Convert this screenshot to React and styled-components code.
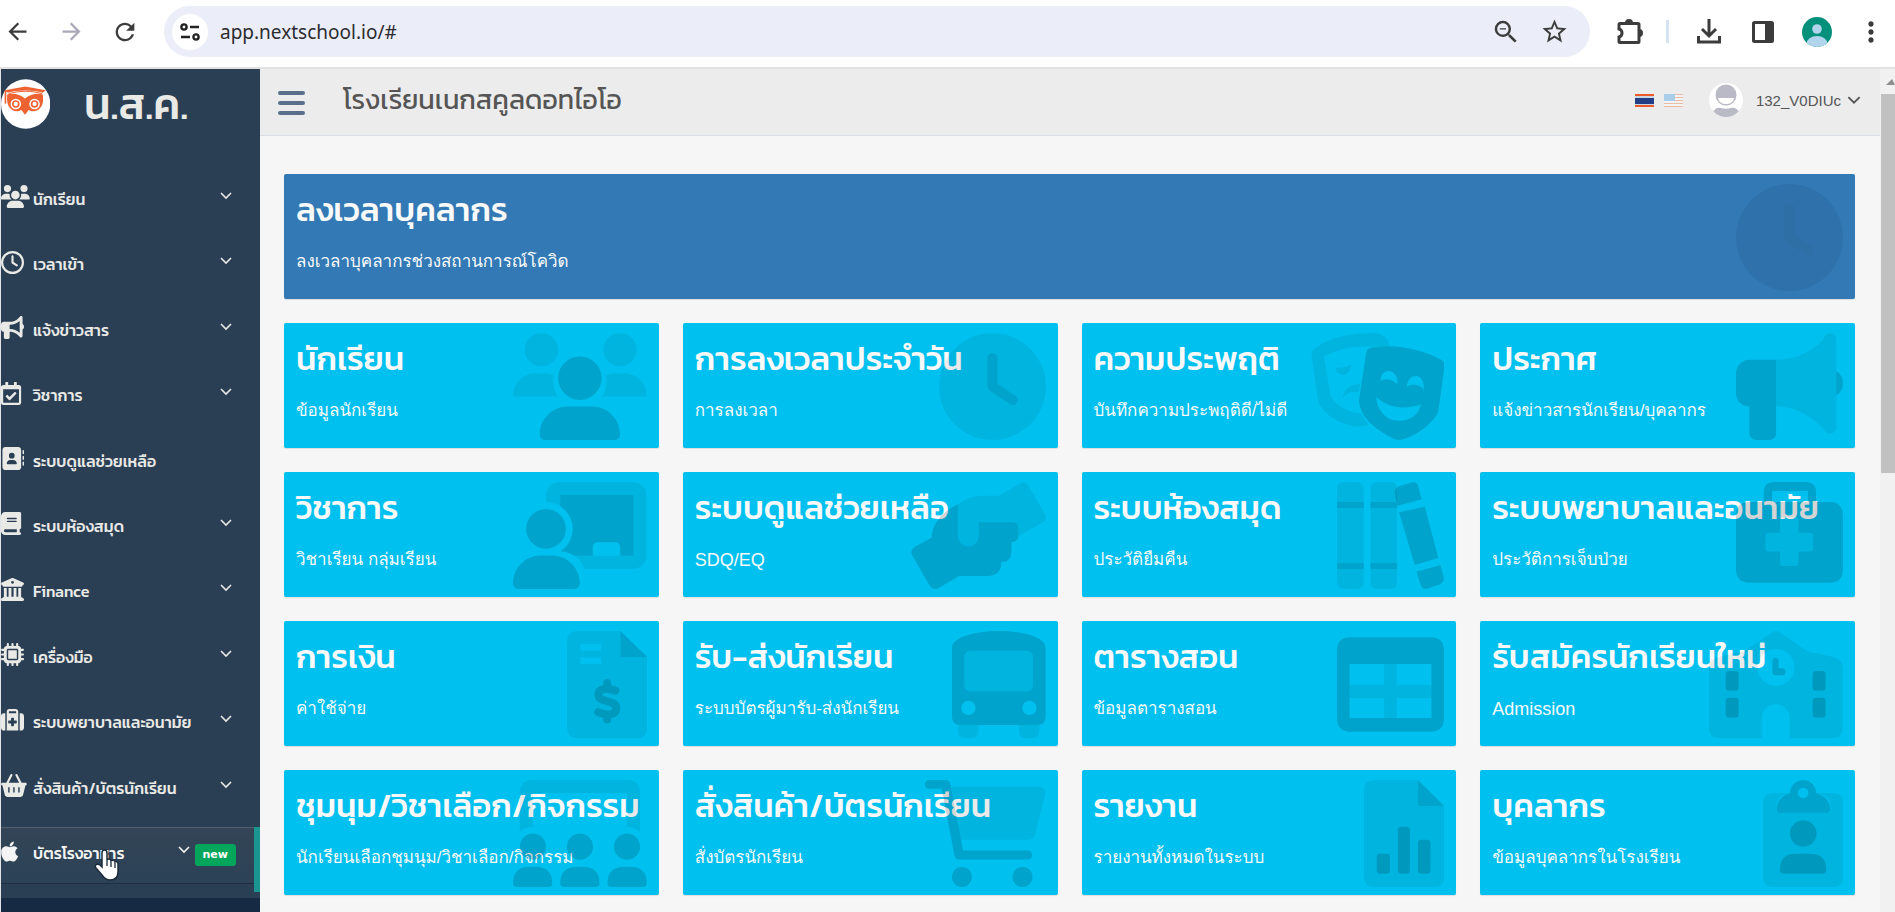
import React from 'react';
import styled, { createGlobalStyle, css } from 'styled-components';
import {
  FaUsers, FaBullhorn, FaAddressBook, FaBook, FaBuildingColumns, FaMicrochip,
  FaSuitcaseMedical, FaBasketShopping, FaApple, FaRegClock,
} from 'react-icons/fa6';
import { FaRegCalendarCheck } from 'react-icons/fa';
import {
  MdArrowBack, MdArrowForward, MdRefresh, MdZoomOut, MdStarOutline, MdMoreVert,
} from 'react-icons/md';

const thai = '"Kanit", "Noto Sans Thai", sans-serif';
const body = '"Liberation Sans", "Loma", sans-serif';

const GlobalStyle = createGlobalStyle`
  *, *::before, *::after { box-sizing: border-box; }
  body { margin: 0; background: #f6f6f6; font-family: ${body}; }
  a { color: inherit; text-decoration: none; }
  button { border: 0; padding: 0; background: none; color: inherit; font: inherit; cursor: pointer; }
  h1, h2, p, ul { margin: 0; padding: 0; }
  ul { list-style: none; }
`;

const Page = styled.div`
  display: flex;
  flex-direction: column;
  height: 100vh;
  overflow: hidden;
`;

/* ---------- browser bar ---------- */
const BrowserBar = styled.header`
  display: flex;
  align-items: center;
  flex: none;
  height: 69px;
  padding: 0 0 4px 4px;
  background: #fff;
  border-bottom: 2px solid #e2e2e2;
  color: #444;
`;
const BarButton = styled.button`
  display: grid;
  place-items: center;
  flex: none;
  width: ${p => p.$w}px;
  height: 44px;
  color: ${p => (p.$muted ? '#a9a8b8' : '#3c3c3c')};
  svg { display: block; }
`;
const Address = styled.div`
  display: flex;
  align-items: center;
  flex: 1;
  height: 51px;
  margin: 0 14px 0 26px;
  padding: 0 12px 0 8px;
  border-radius: 26px;
  background: #ebeef8;
`;
const SiteInfo = styled.button`
  display: grid;
  place-items: center;
  flex: none;
  width: 36px;
  height: 36px;
  border-radius: 50%;
  background: #fff;
`;
const Url = styled.input`
  flex: 1;
  min-width: 0;
  padding: 0 12px;
  border: 0;
  background: none;
  outline: none;
  color: #2b2b2f;
  font: 19px "Noto Sans", sans-serif;
`;
const BarDivider = styled.span`
  width: 3px;
  height: 23px;
  margin: 0 10px;
  background: #d3e3f1;
`;

/* ---------- app frame ---------- */
const Frame = styled.div`
  display: flex;
  flex: 1;
  min-height: 0;
`;
const Sidebar = styled.aside`
  display: flex;
  flex-direction: column;
  flex: none;
  width: 260px;
  border-left: 1px solid #dfe3e8;
  background: #2a3f54;
  color: #e9e9e6;
  font-family: ${thai};
`;
const Brand = styled.a`
  display: flex;
  align-items: center;
  gap: 34px;
  height: 72px;
  margin-bottom: 31px;
  font-weight: 500;
  font-size: 43px;
  line-height: 60px;
  padding-bottom: 2px;
`;
const Nav = styled.ul`
  display: grid;
  grid-auto-rows: 1fr;
  flex: 1;
  margin-bottom: 6px;
`;
const NavItem = styled.li`
  position: relative;
  padding-bottom: 8px;
  border-right: 6px solid ${p => (p.$active ? '#1a9591' : 'transparent')};
`;
const NavLink = styled.a`
  display: flex;
  align-items: center;
  height: 100%;
  padding-right: ${p => (p.$active ? 18 : 22)}px;
  font-weight: 500;
  font-size: 16px;
  line-height: 24px;
  border: 1px solid transparent;
  border-width: 1px 0;
  ${p => p.$active && css`
    color: #f4f4f4;
    border-top-color: #53606f;
    border-bottom-color: #1f2f40;
    background: linear-gradient(#334556, #2c4257);
  `}
`;
const NavIcon = styled.span`
  display: flex;
  width: 32px;
  padding-bottom: 8px;
  svg { width: 29px; height: 23px; }
`;
const NavText = styled.span`
  flex: 1;
  white-space: nowrap;
  padding-bottom: 4px;
`;
const Chevron = styled.svg`
  display: block;
  width: 12px;
  height: 8px;
  margin-bottom: 10px;
`;
const Badge = styled.span`
  margin-left: 5px;
  padding: 0 8px;
  border-radius: 3px;
  background: #04a65c;
  color: #fff;
  font: 700 11px/22px "DejaVu Sans", sans-serif;
`;
const SidebarFoot = styled.div`
  height: 14px;
  background: #172a43;
`;
const Pointer = styled.svg`
  position: absolute;
  left: 93px;
  top: 22px;
  width: 25px;
  height: 32px;
`;

const Main = styled.main`
  display: flex;
  flex-direction: column;
  flex: 1;
  min-width: 0;
`;
const TopBar = styled.div`
  display: flex;
  align-items: center;
  flex: none;
  height: 67px;
  padding: 0 19px 4px 18px;
  background: #ececec;
  border-bottom: 1px solid #d9dee4;
  color: #555;
`;
const MenuButton = styled.button`
  display: grid;
  gap: 6px;
  width: 27px;
  margin: 6px 38px 0 0;
  span { height: 4px; border-radius: 2px; background: #5a6f8c; }
`;
const SchoolName = styled.h1`
  flex: 1;
  font: 400 27px/40px ${thai};
`;
const Flag = styled.button`
  margin-right: 10px;
  opacity: ${p => (p.$faded ? 0.4 : 1)};
  svg { display: block; }
`;
const UserMenu = styled.button`
  display: flex;
  align-items: center;
  margin-left: 16px;
  font: 15px ${body};
  svg:first-child { margin-right: 13px; }
  ${Chevron} { width: 14px; height: 9px; margin: 0 0 0 6px; }
`;
const Board = styled.div`
  display: grid;
  grid-template-columns: repeat(4, minmax(0, 1fr));
  grid-auto-rows: 125px;
  gap: 24px;
  padding: 38px 25px 0 24px;
`;
const Tile = styled.a`
  position: relative;
  display: block;
  grid-column: ${p => (p.$wide ? '1 / -1' : 'auto')};
  padding: 8px 12px;
  border-radius: 2px;
  background: ${p => (p.$wide ? '#3279b5' : '#00c0ef')};
  box-shadow: 0 1px 1px rgba(0, 0, 0, 0.1);
  color: #f9f9f9;
`;
const TileTitle = styled.h2`
  font: 500 33px/56px ${thai};
  white-space: nowrap;
`;
const TileNote = styled.p`
  margin-top: 10px;
  font: 17px/28px ${body};
  white-space: nowrap;
  &:lang(en) { font-size: 18px; }
`;
const TileArt = styled.svg`
  position: absolute;
  top: 10px;
  right: 12px;
  height: 107px;
  fill: #000;
  .p { opacity: ${p => (p.$wide ? 0.08 : 0.15)}; }
  .s { opacity: 0.06; }
`;
const Scrollbar = styled.div`
  display: flex;
  flex-direction: column;
  align-items: flex-end;
  flex: none;
  width: 15px;
  background: #f1f1f1;
`;
const ScrollArrow = styled.span`
  margin: 10px 0 9px;
  border: 6px solid transparent;
  border-right-width: 3px;
  border-top: 0;
  border-bottom-color: #8f8f8f;
`;
const ScrollThumb = styled.span`
  width: 14px;
  height: 45%;
  background: #c1c1c1;
`;

const Down = () => (
  <Chevron viewBox="0 0 12 8" fill="none" stroke="currentColor" strokeWidth="1.6">
    <path d="M1 1l5 5 5-5" />
  </Chevron>
);

const Owl = () => (
  <svg width="49" height="50" viewBox="1 24 149 150">
    <circle cx="76" cy="99" r="75" fill="#fff" />
    <g fill="#ee6332">
      <path d="M12 57L75 46l62 11-9 8c-30-9-76-9-106 0z" />
      <path d="M20 70c18-5 40 0 54 12 14-12 36-17 54-12 3 20 0 33-9 43-10 10-24 10-34 4l-11 15-11-15c-12 7-25 5-34-5-8-10-11-22-9-42z" />
      <path d="M12 58h5v40h-5z" />
    </g>
    <g fill="#fff">
      <circle cx="46" cy="99" r="16" /><circle cx="103" cy="99" r="16" />
    </g>
    <g fill="none" stroke="#ee6332" strokeWidth="5">
      <circle cx="46" cy="99" r="9" /><circle cx="103" cy="99" r="9" />
      <path strokeWidth="3" d="M24 68c30-10 72-10 102 0" />
    </g>
  </svg>
);

/* Two-tone drawings shown at the right of each tile: [view box, drawing] */
const art = {
  clock: ['0 0 512 512', <>
    <path className="s" d="M256 0a256 256 0 1 0 0 512 256 256 0 0 0 0-512zM256 96c-13.300 0-24 10.700-24 24v136c0 8 4 15.500 10.700 20l96 64c11 7.400 25.900 4.400 33.300-6.700s4.400-25.900-6.700-33.300L280 243.200V120c0-13.300-10.700-24-24-24z" fillRule="evenodd" />
    <path className="p" d="M256 96c-13.300 0-24 10.700-24 24v136c0 8 4 15.500 10.700 20l96 64c11 7.400 25.900 4.400 33.300-6.700s4.400-25.900-6.700-33.300L280 243.200V120c0-13.300-10.700-24-24-24z" />
  </>],
  users: ['0 0 640 512', <>
    <path className="s" d="M144 0a80 80 0 1 1-16 160A80 80 0 1 1 144 0zM512 0a80 80 0 1 1 0 160A80 80 0 1 1 512 0zM0 298.700C0 239.800 47.800 192 106.700 192h42.700c15.900 0 31 3.500 44.600 9.700-1.300 7.200-1.900 14.700-1.900 22.300 0 30 8 60 22 80H21.300C9.600 304 0 304 0 298.700zM426 304c14-20 22-50 22-80 0-7.600-.7-15-1.900-22.300 13.600-6.300 28.700-9.700 44.600-9.700h42.700C592.200 192 640 239.800 640 298.700c0 5.300-9.600 5.300-21.300 5.300z" />
    <path className="p" d="M216 216a104 104 0 1 1 208 0 104 104 0 1 1-208 0zM128 485.300C128 411.700 187.700 352 261.300 352h117.400C452.300 352 512 411.700 512 485.300c0 14.700-11.900 26.700-26.700 26.700H154.700c-14.700 0-26.700-11.900-26.700-26.700z" />
  </>],
  masks: ['29 23 403 323', <>
    <path className="s" d="M30 92q0-17 15-26C90 35 160 20 225 24q37 4 42 39c-27-2-45-1-62 1C150 63 100 75 68 95l20 115c12 30 52 53 92 55l23 35c-50 18-138-20-153-75zM102 128q23 2 49-11-3 33-26 33-20-2-23-22zM124 222c4-32 26-45 54-45l-5 26c-23-5-38 2-49 19z" />
    <path className="p" fillRule="evenodd" d="M196 80q4-12 19-14c75-11 155 9 210 39q9 7 7 20l-18 130c-6 35-74 87-119 91q-15 0-25-8C220 310 175 275 174 225zM238 168c2-23 14-30 26-30 16 1 28 17 26 40-12-15-35-18-52-10zM318 184c4-24 17-32 29-31 15 2 24 17 22 40-11-15-34-18-51-9zM226 216c44 39 94 36 135 23-9 36-36 51-71 49-35-2-62-33-64-72z" />
  </>],
  horn: ['0 0 512 512', <>
    <path className="s" d="M192 128c90 0 165-35 221-92l14-25c10-16 53-16 53 21v416c0 34-40 44-55 21-58-70-140-117-233-117z" />
    <path className="p" d="M64 128h128v352c0 18-14 32-32 32H96c-18 0-32-14-32-32V352c-35 0-64-29-64-64v-96c0-35 29-64 64-64zM480 182c18 10 32 32 32 58s-14 48-32 58z" />
  </>],
  teacher: ['0 0 640 512', <>
    <mask id="teacher-gap"><rect width="640" height="512" fill="#fff" /><circle cx="158" cy="224" r="128" fill="#000" /><path d="M0 512V330h210c70 0 125 40 135 100v82z" fill="#000" /></mask>
    <g mask="url(#teacher-gap)">
      <path className="s" fillRule="evenodd" d="M224 0h352c35 0 64 29 64 64v288c0 35-29 64-64 64H158V64c0-35 31-64 66-64zM226 62v291h351V62z" />
      <path className="p" d="M226 62h351v291h-64v-41c0-14-10-24-24-24h-83c-14 0-24 10-24 24v41H226z" />
    </g>
    <path className="p" d="M63 224a95 95 0 1 1 190 0 95 95 0 1 1-190 0zM0 485c0-73 60-133 133-133h54c73 0 133 60 133 133 0 15-12 27-27 27H27c-15 0-27-12-27-27z" />
  </>],
  hands: ['31 20 406 322', <>
    <path className="s" d="M172 88c23-18 43-27 78-27h45l62-36q16-10 27 5l50 86q7 14-4 24l-76 44v-24q0-19-19-19H235v41a31 31 0 0 1-63 0z" />
    <path className="p" d="M172 88c-42 17-79 57-79 100l-49 26q-17 10-10 26l54 93q8 12 22 8l66-38h89q38-3 38-42 30 1 30-31v-29q21-1 21-21v-20q0-19-19-19H235v41a31 31 0 0 1-63 0z" />
  </>],
  books: ['0 0 512 512', <>
    <path className="s" d="M32 0h64q32 0 32 32v64H0V32Q0 0 32 0zM0 125h128v263H0zM0 416h128v64q0 32-32 32H32q-32 0-32-32zM192 0h64q31 0 31 32v64H160V32q0-32 32-32zM160 125h127v263H160zM160 416h127v64q0 32-31 32h-64q-32 0-32-32z" />
    <path className="p" d="M0 96h128v29H0zM0 388h128v28H0zM160 96h127v29H160zM160 388h127v28H160zM277 50q-2-22 20-30l60-18q25-6 31 16l17 65-118 32zM297 145l123-27 65 246-113 33zM380 429l115-32 16 60q4 22-18 32l-58 21q-24 6-33-14z" />
  </>],
  medkit: ['0 0 512 512', <>
    <path className="p" fillRule="evenodd" d="M133 96V48q0-48 48-48h154q48 0 48 48v48h65q64 0 64 64v258q0 64-64 64H64q-64 0-64-64V160q0-64 64-64zM173 96h171V43H173zM211 185v58h-54q-16 0-16 16v57q0 16 16 16h54v54q0 16 16 16h56q16 0 16-16v-54h54q16 0 16-16v-57q0-16-16-16h-54v-58q0-16-16-16h-56q-16 0-16 16z" />
    <path className="s" d="M211 185v58h-54q-16 0-16 16v57q0 16 16 16h54v54q0 16 16 16h56q16 0 16-16v-54h54q16 0 16-16v-57q0-16-16-16h-54v-58q0-16-16-16h-56q-16 0-16 16z" />
  </>],
  invoice: ['0 0 384 512', <>
    <path className="s" fillRule="evenodd" d="M48 0h208v124h128v340q0 48-48 48H48q-48 0-48-48V48Q0 0 48 0zM65 62v33h98V62zM65 126v32h98v-32z" />
    <path className="p" d="M256 0l128 124H256z" />
    <path className="p" fill="none" stroke="#000" strokeWidth="38" strokeLinecap="round" d="M192 249v24M192 400v24M232 286c-45-18-82-10-82 18 0 42 86 22 86 66 0 32-42 38-86 18" />
  </>],
  bus: ['0 0 448 512', <>
    <path className="s" d="M91 94h264q32 0 32 32v131q0 32-32 32H91q-32 0-32-32V126q0-32 32-32zM29 450h96v30q0 32-32 32H61q-32 0-32-32zM321 450h98v30q0 32-32 32h-34q-32 0-32-32z" />
    <path className="p" fillRule="evenodd" d="M0 80C0 30 110 0 224 0s224 30 224 80v330q0 40-40 40H40q-40 0-40-40zM91 94q-32 0-32 32v131q0 32 32 32h264q32 0 32-32V126q0-32-32-32zM78 334a34 34 0 1 0 1 0zM370 334a34 34 0 1 0 1 0z" />
  </>],
  table: ['0 0 512 512', <>
    <path className="s" d="M226 158h60v99h166v63H286v96h-60v-96H60v-63h166z" />
    <path className="p" fillRule="evenodd" d="M64 30h384q64 0 64 64v324q0 64-64 64H64q-64 0-64-64V94q0-64 64-64zM60 158v258h392V158z" />
  </>],
  school: ['0 0 640 512', <>
    <path className="s" fillRule="evenodd" d="M302 6q18-12 36 0l136 92 118 25q48 12 48 55v286q0 48-48 48H386v-95a66 66 0 0 0-133 0v95H48q-48 0-48-48V178q0-43 48-55l118-25zM320 86a88 88 0 1 0 1 0z" />
    <path className="p" d="M303 145q0-16 15-16t15 16v33h17q16 0 16 17t-16 17h-31q-16 0-16-16zM96 191h30q16 0 16 16v63q0 16-16 16H96q-16 0-16-16v-63q0-16 16-16zM96 319h30q16 0 16 16v63q0 16-16 16H96q-16 0-16-16v-63q0-16 16-16zM512 191h30q16 0 16 16v63q0 16-16 16h-30q-16 0-16-16v-63q0-16 16-16zM512 319h30q16 0 16 16v63q0 16-16 16h-30q-16 0-16-16v-63q0-16 16-16z" />
  </>],
  club: ['0 0 640 512', <>
    <mask id="club-gap"><rect width="640" height="512" fill="#fff" /><circle cx="95" cy="320" r="96" /><circle cx="320" cy="320" r="96" /><circle cx="545" cy="320" r="96" /></mask>
    <path className="s" mask="url(#club-gap)" d="M96 0h448q64 0 64 64v190h-63V62H95v192H32V64Q32 0 96 0z" />
    <path className="p" d="M95 256a63 63 0 1 0 1 0zM320 256a63 63 0 1 0 1 0zM545 256a63 63 0 1 0 1 0zM0 494q0-79 80-79h28q80 0 80 79 0 18-18 18H18q-18 0-18-18zM226 494q0-79 80-79h28q80 0 80 79 0 18-18 18H244q-18 0-18-18zM452 494q0-79 80-79h28q80 0 80 79 0 18-18 18H470q-18 0-18-18z" />
  </>],
  cart: ['0 0 576 512', <>
    <path className="s" d="M127 32h415q40 0 33 38l-48 188q-8 28-36 28H172z" />
    <path className="p" d="M22 0h74q22 0 26 20l60 317h308q22 0 22 22t-22 22H166q-20 0-25-20L80 42H22Q0 42 0 21T22 0zM176 416a48 48 0 1 0 1 0zM466 416a48 48 0 1 0 1 0z" />
  </>],
  report: ['0 0 384 512', <>
    <path className="s" d="M48 0h210v124h126v340q0 48-48 48H48q-48 0-48-48V48Q0 0 48 0z" />
    <path className="p" d="M258 0l126 124H258zM77 353h31q16 0 16 16v63q0 16-16 16H77q-16 0-16-16v-63q0-16 16-16zM178 224h26q16 0 16 16v192q0 16-16 16h-26q-16 0-16-16V240q0-16 16-16zM274 286h28q16 0 16 16v130q0 16-16 16h-28q-16 0-16-16V302q0-16 16-16z" />
  </>],
  staff: ['0 0 384 512', <>
    <path className="s" d="M48 62h82q-64 10-64 60v35h255v-35q0-50-64-60h79q48 0 48 48v354q0 48-48 48H48q-48 0-48-48V110q0-48 48-48z" />
    <path className="p" fillRule="evenodd" d="M66 142q0-60 64-80a62 62 0 0 1 124 0q67 20 67 80 0 15-16 15H82q-16 0-16-15zM192 37a25 25 0 1 0 1 0zM192 192a64 64 0 1 0 1 0zM81 430q0-77 75-77h72q75 0 75 77 0 18-18 18H99q-18 0-18-18z" />
  </>],
};

const tiles = [
  ['ลงเวลาบุคลากร', 'ลงเวลาบุคลากรช่วงสถานการณ์โควิด', 'clock'],
  ['นักเรียน', 'ข้อมูลนักเรียน', 'users'],
  ['การลงเวลาประจำวัน', 'การลงเวลา', 'clock'],
  ['ความประพฤติ', 'บันทึกความประพฤติดี/ไม่ดี', 'masks'],
  ['ประกาศ', 'แจ้งข่าวสารนักเรียน/บุคลากร', 'horn'],
  ['วิชาการ', 'วิชาเรียน กลุ่มเรียน', 'teacher'],
  ['ระบบดูแลช่วยเหลือ', 'SDQ/EQ', 'hands', 'en'],
  ['ระบบห้องสมุด', 'ประวัติยืมคืน', 'books'],
  ['ระบบพยาบาลและอนามัย', 'ประวัติการเจ็บป่วย', 'medkit'],
  ['การเงิน', 'ค่าใช้จ่าย', 'invoice'],
  ['รับ-ส่งนักเรียน', 'ระบบบัตรผู้มารับ-ส่งนักเรียน', 'bus'],
  ['ตารางสอน', 'ข้อมูลตารางสอน', 'table'],
  ['รับสมัครนักเรียนใหม่', 'Admission', 'school', 'en'],
  ['ชุมนุม/วิชาเลือก/กิจกรรม', 'นักเรียนเลือกชุมนุม/วิชาเลือก/กิจกรรม', 'club'],
  ['สั่งสินค้า/บัตรนักเรียน', 'สั่งบัตรนักเรียน', 'cart'],
  ['รายงาน', 'รายงานทั้งหมดในระบบ', 'report'],
  ['บุคลากร', 'ข้อมูลบุคลากรในโรงเรียน', 'staff'],
];

const menu = [
  [FaUsers, 'นักเรียน', true],
  [FaRegClock, 'เวลาเข้า', true],
  [FaBullhorn, 'แจ้งข่าวสาร', true],
  [FaRegCalendarCheck, 'วิชาการ', true],
  [FaAddressBook, 'ระบบดูแลช่วยเหลือ', false],
  [FaBook, 'ระบบห้องสมุด', true],
  [FaBuildingColumns, 'Finance', true],
  [FaMicrochip, 'เครื่องมือ', true],
  [FaSuitcaseMedical, 'ระบบพยาบาลและอนามัย', true],
  [FaBasketShopping, 'สั่งสินค้า/บัตรนักเรียน', true],
  [FaApple, 'บัตรโรงอาหาร', true, 'new'],
];

export default function App() {
  return (
    <Page lang="th">
      <GlobalStyle />
      <BrowserBar>
        <BarButton $w={27} aria-label="Back"><MdArrowBack size={27} /></BarButton>
        <BarButton $w={80} $muted aria-label="Forward"><MdArrowForward size={27} /></BarButton>
        <BarButton $w={27} aria-label="Reload"><MdRefresh size={28} /></BarButton>
        <Address>
          <SiteInfo aria-label="Site information">
            <svg width="20" height="18" viewBox="0 0 20 18" fill="none" stroke="#222" strokeWidth="2.400">
              <circle cx="4" cy="4" r="2.600" /><path d="M10 4h9M1 14h9" /><circle cx="16" cy="14" r="2.600" />
            </svg>
          </SiteInfo>
          <Url aria-label="Address" defaultValue="app.nextschool.io/#" />
          <BarButton $w={48} aria-label="Zoom"><MdZoomOut size={30} /></BarButton>
          <BarButton $w={48} aria-label="Bookmark"><MdStarOutline size={29} /></BarButton>
        </Address>
        <BarButton $w={52} aria-label="Extensions">
          <svg width="26" height="26" viewBox="0 0 26 26">
            <path d="M3 4.500h18q1 0 1 1v17q0 1-1 1H3q-1 0-1-1v-4.500c4-1 4-7 0-8V5.500q0-1 1-1z" fill="none" stroke="currentColor" strokeWidth="3" />
            <path d="M8 4a4 4 0 0 1 8 0zM22 10a4 4 0 0 1 0 8z" fill="currentColor" />
          </svg>
        </BarButton>
        <BarDivider />
        <BarButton $w={60} aria-label="Downloads">
          <svg width="24" height="25" viewBox="0 0 24 25" fill="none" stroke="currentColor" strokeWidth="3">
            <path d="M12 0v16M5 10l7 7 7-7M1.500 17v6h21v-6" />
          </svg>
        </BarButton>
        <BarButton $w={48} aria-label="Side panel">
          <svg width="22" height="22" viewBox="0 0 22 22">
            <rect x="1.500" y="1.500" width="19" height="19" rx="1" fill="none" stroke="currentColor" strokeWidth="3" />
            <path d="M13 1h8v20h-8z" fill="currentColor" />
          </svg>
        </BarButton>
        <BarButton $w={60} aria-label="Profile">
          <svg width="30" height="30" viewBox="0 0 30 30">
            <clipPath id="profile"><circle cx="15" cy="15" r="15" /></clipPath>
            <g clipPath="url(#profile)">
              <path fill="#04907a" d="M0 0h30v30H0z" />
              <circle cx="15" cy="12" r="4.800" fill="#b0d5ec" /><ellipse cx="15" cy="27" rx="10.500" ry="8" fill="#b0d5ec" />
            </g>
          </svg>
        </BarButton>
        <BarButton $w={48} aria-label="More"><MdMoreVert size={32} /></BarButton>
      </BrowserBar>
      <Frame>
        <Sidebar>
          <Brand href="#"><Owl />น.ส.ค.</Brand>
          <Nav>
            {menu.map(([Icon, text, opens, badge]) => (
              <NavItem key={text} $active={!!badge}>
                <NavLink href="#" $active={!!badge}>
                  <NavIcon><Icon preserveAspectRatio="xMinYMid meet" /></NavIcon>
                  <NavText>{text}</NavText>
                  {opens && <Down />}
                  {badge && <Badge>{badge}</Badge>}
                </NavLink>
                {badge && (
                  <Pointer viewBox="0 0 25 32">
                    <path d="M8 18V4c0-4 5-4 5 0v7c1-2 4-1 4 1 1-1 4-1 4 1 1-1 3 0 3 2v8c0 5-3 8-8 8-4 0-6-2-8-5l-6-7c-2-3 1-5 4-3z" fill="#fff" stroke="#1d2c3b" strokeWidth="1.500" />
                    <path d="M13 11v6M17 13v5M21 14v5" stroke="#1d2c3b" strokeWidth="1.300" />
                  </Pointer>
                )}
              </NavItem>
            ))}
          </Nav>
          <SidebarFoot />
        </Sidebar>
        <Main>
          <TopBar>
            <MenuButton aria-label="Menu"><span /><span /><span /></MenuButton>
            <SchoolName>โรงเรียนเนกสคูลดอทไอโอ</SchoolName>
            <Flag aria-label="ไทย">
              <svg width="19" height="13" viewBox="0 0 19 13">
                <path fill="#f05a2b" d="M0 0h19v13H0z" /><path fill="#c9d6e6" d="M0 2h19v9H0z" /><path fill="#233e85" d="M0 4h19v6H0z" />
              </svg>
            </Flag>
            <Flag $faded aria-label="English">
              <svg width="19" height="13" viewBox="0 0 19 13">
                <path fill="#fff" d="M0 0h19v13H0z" /><path stroke="#e8743c" d="M0 .5h19M0 3.500h19M0 6.500h19M0 9.500h19M0 12.500h19" /><path fill="#4aa3e8" d="M0 0h11v7H0z" />
              </svg>
            </Flag>
            <UserMenu>
              <svg width="34" height="34" viewBox="0 0 34 34">
                <clipPath id="user"><circle cx="17" cy="17" r="17" /></clipPath>
                <g clipPath="url(#user)">
                  <path fill="#fff" d="M0 0h34v34H0z" />
                  <circle cx="17" cy="12" r="10.500" fill="#bab9c6" />
                  <path fill="#fff" d="M9 15h16c-1 8-15 8-16 0z" />
                  <path fill="#bab9c6" d="M3 30c3-5 6-6 9-5 3 1 7 1 10 0 3-1 6 0 9 5v4H3z" />
                </g>
              </svg>
              132_V0DIUc
              <Down />
            </UserMenu>
          </TopBar>
          <Board>
            {tiles.map(([title, note, icon, lang], i) => (
              <Tile key={title} href="#" $wide={i === 0}>
                <TileTitle>{title}</TileTitle>
                <TileNote lang={lang}>{note}</TileNote>
                <TileArt viewBox={art[icon][0]} $wide={i === 0}>{art[icon][1]}</TileArt>
              </Tile>
            ))}
          </Board>
        </Main>
        <Scrollbar><ScrollArrow /><ScrollThumb /></Scrollbar>
      </Frame>
    </Page>
  );
}
